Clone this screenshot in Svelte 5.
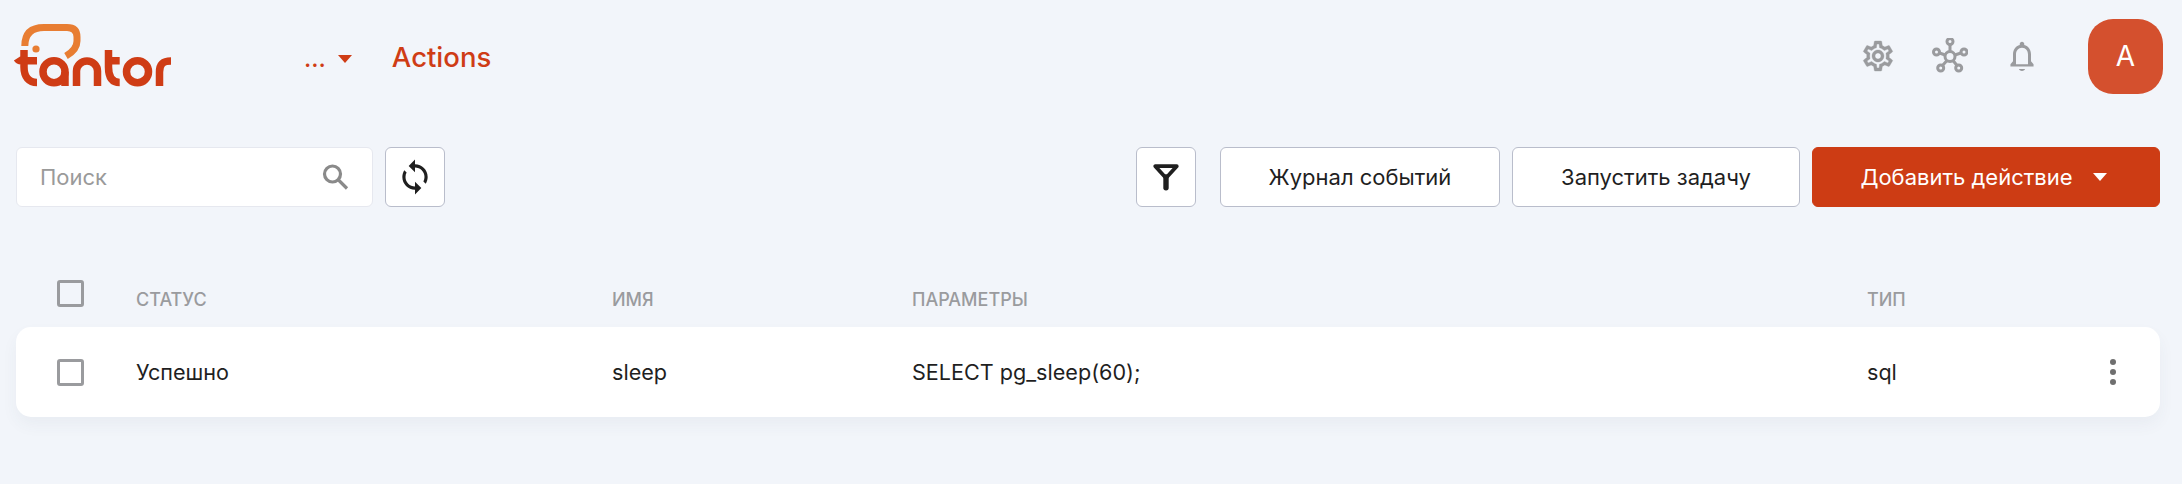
<script lang="ts">
  const rows = [{ status: 'Успешно', name: 'sleep', params: 'SELECT pg_sleep(60);', type: 'sql' }];
</script>

<div class="page">
  <header class="topbar">
    <a class="logo" href="#top" aria-label="tantor">
      <svg width="176" height="76" viewBox="0 18 176 76" fill="none">
        <!-- balloon -->
        <path d="M24.800 46 C24.800 33 32 27.500 44 27.500 H67 C74 27.500 77 31 77 37 V41 C77 47 73 52 66 56" stroke="#e87d32" stroke-width="7" />
        <circle cx="36" cy="49" r="3.600" fill="#e87d32" />
        <g stroke="#cf3c15" stroke-width="7.500">
          <!-- t -->
          <path d="M24 50 V67 C24 77 29 82.500 37 82.500 M17 58.500 C18 60 19 60.700 21 60.700 H37" />
          <!-- a -->
          <circle cx="54" cy="71.700" r="11" />
          <path d="M65 71.700 V86" />
          <!-- n -->
          <path d="M76.500 86 V71 A10.500 10 0 0 1 97.500 71 V86" />
          <!-- t -->
          <path d="M108.500 50 V67 C108.500 77 112 82.500 119.700 82.500 M108.500 60.700 H119.700" />
          <!-- o -->
          <circle cx="137.500" cy="71.700" r="11" />
          <!-- r -->
          <path d="M159.500 86 V72 C159.500 64 163 61 171 61" />
        </g>
      </svg>
    </a>
    <nav class="nav">
      <button class="crumb">
        <span>...</span>
        <span class="caret"></span>
      </button>
      <span class="title">Actions</span>
    </nav>
    <div class="tools">
      <svg class="gray gear" width="36" height="36" viewBox="0 0 24 24"><path d="M19.430 12.980c.04-.32.07-.64.07-.98 0-.34-.03-.66-.07-.98l2.110-1.650c.19-.15.24-.42.12-.64l-2-3.460c-.09-.16-.26-.25-.44-.25-.06 0-.12.01-.17.03l-2.490 1c-.52-.4-1.080-.73-1.690-.98l-.38-2.650C14.460 2.180 14.250 2 14 2h-4c-.25 0-.46.18-.49.42l-.38 2.650c-.61.25-1.170.59-1.690.98l-2.490-1c-.06-.02-.12-.03-.18-.03-.17 0-.34.09-.43.25l-2 3.460c-.13.22-.07.49.12.64l2.110 1.650c-.04.32-.07.65-.07.98 0 .33.03.66.07.98l-2.110 1.650c-.19.15-.24.42-.12.64l2 3.460c.09.16.26.25.44.25.06 0 .12-.01.17-.03l2.490-1c.52.4 1.080.73 1.690.98l.38 2.650c.03.24.24.42.49.42h4c.25 0 .46-.18.49-.42l.38-2.650c.61-.25 1.170-.59 1.690-.98l2.490 1c.06.02.12.03.18.03.17 0 .34-.09.43-.25l2-3.460c.12-.22.07-.49-.12-.64l-2.110-1.650zm-1.980-1.710c.04.31.05.52.05.73 0 .21-.02.43-.05.73l-.14 1.130.89.7 1.080.84-.7 1.210-1.270-.51-1.040-.42-.9.68c-.43.32-.84.56-1.250.73l-1.060.43-.16 1.130-.2 1.350h-1.400l-.19-1.350-.16-1.130-1.060-.43c-.43-.18-.83-.41-1.230-.71l-.91-.7-1.060.43-1.270.51-.7-1.210 1.080-.84.89-.7-.14-1.130c-.03-.31-.05-.54-.05-.74s.02-.43.05-.73l.14-1.130-.89-.7-1.080-.84.7-1.210 1.270.51 1.040.42.9-.68c.43-.32.84-.56 1.250-.73l1.060-.43.16-1.130.2-1.350h1.390l.19 1.350.16 1.130 1.060.43c.43.18.83.41 1.230.71l.91.7 1.060-.43 1.270-.51.7 1.210-1.070.85-.89.7.14 1.130zM12 8c-2.210 0-4 1.790-4 4s1.790 4 4 4 4-1.790 4-4-1.790-4-4-4zm0 6c-1.100 0-2-.9-2-2s.9-2 2-2 2 .9 2 2-.9 2-2 2z" /></svg>
      <svg class="net" width="36" height="36" viewBox="0 0 36 36" fill="none" stroke="#9a9b9e" stroke-width="3">
        <circle cx="18" cy="18.500" r="5" />
        <circle cx="18" cy="3.500" r="3" />
        <circle cx="4.500" cy="14" r="3" />
        <circle cx="32" cy="14" r="3" />
        <circle cx="8.700" cy="30" r="3" />
        <circle cx="26.700" cy="30" r="3" />
        <path d="M18 6.500 V13.500 M7.500 15 L13.200 17 M29 15 L22.800 17 M10.500 27.500 L15 22.500 M25 27.500 L21 22.500" />
      </svg>
      <svg class="gray bell" width="36" height="36" viewBox="0 0 24 24"><path d="M12 22c1.100 0 2-.6 2-1.300h-4c0 .7.9 1.300 2 1.300zm6-6.500V11c0-3.070-1.630-5.640-4.500-6.320V4c0-.83-.67-1.500-1.500-1.500s-1.500.67-1.500 1.500v.68C7.640 5.360 6 7.920 6 11v4.500l-1.700 2V19h15.400v-1.500l-1.700-2zm-2 2H8v-6.500c0-2.480 1.510-4.500 4-4.500s4 2.020 4 4.500v6.500z" /></svg>
      <div class="avatar">A</div>
    </div>
  </header>

  <section class="toolbar">
    <label class="search">
      <input type="text" placeholder="Поиск" />
      <svg width="30" height="30" viewBox="0 0 30 30" fill="none" stroke="#8a8a8a" stroke-width="3.200">
        <circle cx="12.500" cy="12" r="8" />
        <path d="M18.500 18 L27 26.500" />
      </svg>
    </label>
    <button class="btn square" aria-label="Обновить">
      <svg width="38" height="38" viewBox="0 0 24 24" fill="#1f1f1f"><path d="M12 4V1L8 5l4 4V6c3.310 0 6 2.690 6 6 0 1.010-.25 1.970-.7 2.800l1.460 1.460C19.540 15.030 20 13.570 20 12c0-4.420-3.580-8-8-8zm0 14c-3.310 0-6-2.690-6-6 0-1.010.25-1.970.7-2.800L5.240 7.740C4.460 8.970 4 10.430 4 12c0 4.420 3.580 8 8 8v3l4-4-4-4v3z" /></svg>
    </button>
    <div class="spacer"></div>
    <button class="btn square filter" aria-label="Фильтр">
      <svg width="28" height="28" viewBox="0 0 26 26" fill="none" stroke="#1f1f1f" stroke-width="3.500" stroke-linejoin="round" stroke-linecap="round">
        <path d="M3 3 H23 L13 14 Z" />
        <path d="M13 13 V23" stroke-width="5" />
      </svg>
    </button>
    <button class="btn log">Журнал событий</button>
    <button class="btn run">Запустить задачу</button>
    <button class="btn primary">
      Добавить действие
      <span class="caret white"></span>
    </button>
  </section>

  <section class="table">
    <div class="grid head">
      <span class="check"></span>
      <span>Статус</span>
      <span>Имя</span>
      <span>Параметры</span>
      <span>Тип</span>
      <span></span>
    </div>
    {#each rows as row}
      <div class="grid row">
        <span class="check"></span>
        <span>{row.status}</span>
        <span>{row.name}</span>
        <span>{row.params}</span>
        <span>{row.type}</span>
        <span class="dots"><i></i><i></i><i></i></span>
      </div>
    {/each}
  </section>
</div>

<style>
  :global(body) {
    background: #f2f5fa;
    font-family: Inter, 'Liberation Sans', sans-serif;
  }

  .page {
    height: 484px;
    padding: 0 22px 0 16px;
    box-sizing: border-box;
    display: flex;
    flex-direction: column;
  }

  .topbar {
    display: flex;
    align-items: center;
    height: 112px;
  }

  .logo {
    display: block;
    width: 176px;
    height: 76px;
    margin-left: -16px;
  }

  .logo svg {
    display: block;
  }

  .nav {
    display: flex;
    align-items: center;
    margin-left: 128px;
    margin-top: 2px;
    gap: 40px;
    color: #cf3c15;
  }

  .crumb {
    display: flex;
    align-items: center;
    gap: 12px;
    padding: 0;
    border: 0;
    background: none;
    color: inherit;
    font: 500 24px Inter, sans-serif;
    margin-top: 3px;
  }

  .caret {
    width: 0;
    height: 0;
    border-left: 7.500px solid transparent;
    border-right: 7.500px solid transparent;
    border-top: 8px solid #cf3c15;
  }

  .caret.white {
    border-top-color: #fff;
    margin-left: 20px;
  }

  .title {
    font-size: 27.500px;
    font-weight: 500;
  }

  .tools {
    margin-left: auto;
    display: flex;
    align-items: center;
    gap: 36px;
    margin-right: -3px;
  }

  .gray {
    fill: #9a9b9e;
  }

  .gear {
    stroke: #9a9b9e;
    stroke-width: 0.25;
  }

  .avatar {
    width: 75px;
    height: 75px;
    margin-left: 12px;
    border-radius: 25px;
    background: #d4502e;
    color: #fff;
    font-size: 28px;
    display: flex;
    align-items: center;
    justify-content: center;
  }

  .toolbar {
    display: flex;
    align-items: center;
    margin-top: 35px;
    height: 60px;
  }

  .search {
    width: 357px;
    height: 60px;
    box-sizing: border-box;
    display: flex;
    align-items: center;
    padding: 0 22px 0 23px;
    background: #fff;
    border: 1.500px solid #e6e8ef;
    border-radius: 6px;
  }

  .search input {
    flex: 1;
    min-width: 0;
    border: 0;
    outline: 0;
    padding: 0;
    background: none;
    font: 400 22px Inter, sans-serif;
    color: #1f1f1f;
  }

  .search input::placeholder {
    color: #9a9a9a;
    opacity: 1;
  }

  .btn {
    height: 60px;
    box-sizing: border-box;
    background: #fff;
    border: 1.500px solid #b9bdcb;
    border-radius: 6px;
    color: #1f1f1f;
    font: 400 22px Inter, sans-serif;
    display: flex;
    align-items: center;
    justify-content: center;
    padding: 0;
  }

  .square {
    width: 60px;
    margin-left: 12px;
  }

  .spacer {
    flex: 1;
  }

  .filter {
    margin-left: 0;
  }

  .log {
    width: 280px;
    margin-left: 24px;
  }

  .run {
    width: 288px;
    margin-left: 12px;
  }

  .primary {
    width: 348px;
    margin-left: 12px;
    padding-right: 5px;
    background: #cd3c14;
    border-color: #cd3c14;
    color: #fff;
  }

  .table {
    margin-top: 64px;
  }

  .grid {
    display: grid;
    grid-template-columns: 79px 476px 300px 955px 243px 1fr;
    align-items: center;
    padding-left: 41px;
    box-sizing: border-box;
  }

  .head {
    height: 56px;
    font-size: 18px;
    font-weight: 500;
    color: #9a9b9e;
    text-transform: uppercase;
  }

  .head .check {
    position: relative;
    top: -6px;
  }

  .row {
    height: 90px;
    background: #fff;
    border-radius: 15px;
    box-shadow: 0 8px 16px rgba(60, 70, 100, 0.05);
    font-size: 21.600px;
    color: #1f1f1f;
  }

  .check {
    width: 27px;
    height: 27px;
    box-sizing: border-box;
    border: 3.500px solid #9a9b9e;
    border-radius: 3px;
  }

  .dots {
    display: flex;
    flex-direction: column;
    align-items: center;
    gap: 4px;
    width: 6px;
  }

  .dots i {
    width: 6px;
    height: 6px;
    border-radius: 50%;
    background: #6f6f6f;
  }
</style>
